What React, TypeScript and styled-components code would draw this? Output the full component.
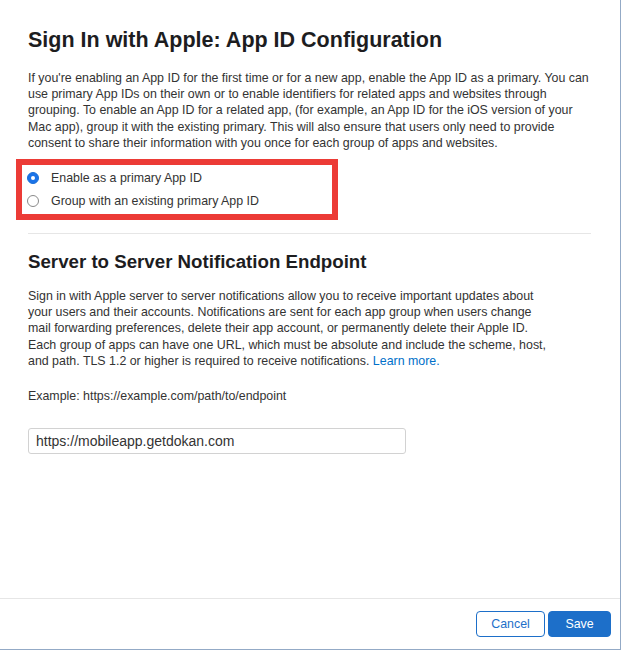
import React from "react";
import styled, { createGlobalStyle } from "styled-components";

const Global = createGlobalStyle`
  html, body { margin: 0; padding: 0; background: #fff; }
  body { font-family: "Liberation Sans", Arial, sans-serif; color: #333; }
  * { box-sizing: border-box; }
`;

const Dialog = styled.div`
  width: 621px;
  height: 650px;
  border-right: 1px solid #93aac6;
  border-bottom: 1px solid #93aac6;
  display: flex;
  flex-direction: column;
  background: #fff;
`;

const Content = styled.div`
  flex: 1;
  padding: 27px 29px 0 28px;
`;

const Title = styled.h1`
  margin: 0;
  font-size: 21.5px;
  line-height: 26px;
  font-weight: 700;
  color: #1d1d1f;
`;

const SubTitle = styled.h2`
  margin: 0;
  font-size: 18.7px;
  line-height: 24px;
  font-weight: 700;
  color: #1d1d1f;
`;

const Paragraph = styled.p<{ $top?: number; $max?: number }>`
  margin: ${(p) => p.$top ?? 0}px 0 0;
  max-width: ${(p) => (p.$max ? `${p.$max}px` : "none")};
  font-size: 12.4px;
  line-height: 16.2px;
  color: #333;
`;

const Link = styled.a`
  color: #0070c9;
  text-decoration: none;
`;

const Highlight = styled.div`
  margin: 8px 0 0 -12px;
  width: 322px;
  border: 6px solid #ec3b36;
  padding: 5px 0 5px 5px;
  display: flex;
  flex-direction: column;
  gap: 7px;
`;

const Option = styled.label`
  display: flex;
  align-items: center;
  gap: 12px;
  font-size: 12.4px;
  line-height: 16px;
  color: #333;
`;

const RadioDot = styled.span<{ $checked?: boolean }>`
  width: 12px;
  height: 12px;
  border-radius: 50%;
  flex: none;
  position: relative;
  background: ${(p) => (p.$checked ? "#1a73e8" : "#fff")};
  border: 1px solid ${(p) => (p.$checked ? "#1a6fd8" : "#8a8a8a")};
  &::after {
    content: "";
    display: ${(p) => (p.$checked ? "block" : "none")};
    position: absolute;
    left: 50%;
    top: 50%;
    width: 4px;
    height: 4px;
    margin: -2px 0 0 -2px;
    border-radius: 50%;
    background: #fff;
  }
`;

const Divider = styled.hr`
  margin: 13px 0 0;
  border: 0;
  border-top: 1px solid #e6e6e6;
`;

const Section = styled.div`
  padding-top: 16px;
`;

const Example = styled.div`
  margin-top: 19px;
  font-size: 12.4px;
  line-height: 16px;
  color: #333;
`;

const Input = styled.input`
  display: block;
  margin-top: 24px;
  width: 378px;
  height: 26px;
  border: 1px solid #d2d2d2;
  border-radius: 3px;
  padding: 0 7px;
  font-family: inherit;
  font-size: 14px;
  color: #333;
  outline: none;
`;

const Footer = styled.div`
  border-top: 1px solid #e6e6e6;
  padding: 12px 9px 12px 0;
  display: flex;
  justify-content: flex-end;
  gap: 3px;
`;

const Button = styled.button<{ $primary?: boolean }>`
  height: 26px;
  padding: 0;
  width: ${(p) => (p.$primary ? 63 : 69)}px;
  border-radius: 4px;
  font-family: inherit;
  font-size: 12.4px;
  cursor: pointer;
  border: 1px solid #1d6fc9;
  background: ${(p) => (p.$primary ? "#1d6fc9" : "#fff")};
  color: ${(p) => (p.$primary ? "#fff" : "#1d6fc9")};
`;

export default function App() {
  return (
    <>
      <Global />
      <Dialog>
        <Content>
          <Title>Sign In with Apple: App ID Configuration</Title>
          <Paragraph $top={17}>
            If you're enabling an App ID for the first time or for a new app, enable the App ID as a
            primary. You can use primary App IDs on their own or to enable identifiers for related apps
            and websites through grouping. To enable an App ID for a related app, (for example, an App ID
            for the iOS version of your Mac app), group it with the existing primary. This will also
            ensure that users only need to provide consent to share their information with you once for
            each group of apps and websites.
          </Paragraph>
          <Highlight>
            <Option>
              <RadioDot $checked />
              Enable as a primary App ID
            </Option>
            <Option>
              <RadioDot />
              Group with an existing primary App ID
            </Option>
          </Highlight>
          <Divider />
          <Section>
            <SubTitle>Server to Server Notification Endpoint</SubTitle>
            <Paragraph $top={14} $max={522}>
              Sign in with Apple server to server notifications allow you to receive important updates
              about your users and their accounts. Notifications are sent for each app group when users
              change mail forwarding preferences, delete their app account, or permanently delete their
              Apple ID. Each group of apps can have one URL, which must be absolute and include the
              scheme, host, and path. TLS 1.2 or higher is required to receive notifications.{" "}
              <Link href="#">Learn more.</Link>
            </Paragraph>
            <Example>Example: https://example.com/path/to/endpoint</Example>
            <Input defaultValue="https://mobileapp.getdokan.com" readOnly />
          </Section>
        </Content>
        <Footer>
          <Button>Cancel</Button>
          <Button $primary>Save</Button>
        </Footer>
      </Dialog>
    </>
  );
}
